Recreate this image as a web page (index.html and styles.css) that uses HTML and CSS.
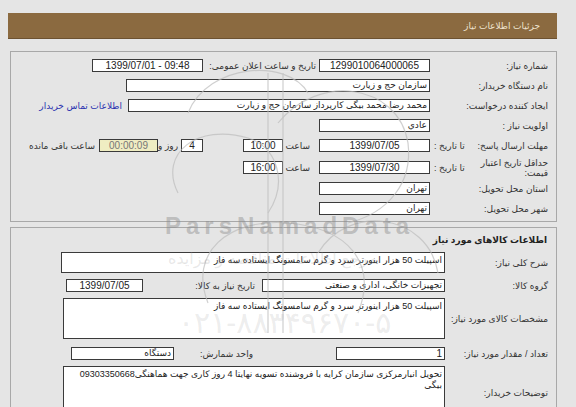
FILE: index.html
```html
<!DOCTYPE html>
<html lang="fa" dir="rtl">
<head>
<meta charset="utf-8">
<title>جزئیات اطلاعات نیاز</title>
<link rel="stylesheet" href="styles.css">
</head>
<body>
<div class="page">
  <div class="header"><span>جزئیات اطلاعات نیاز</span></div>

  <div class="box box1">
    <div class="row">
      <div class="lbl">شماره نیاز:</div>
      <div class="in w111 ctr">1299010064000065</div>
      <div class="lbl2">تاریخ و ساعت اعلان عمومی:</div>
      <div class="in w111 ctr">1399/07/01 - 09:48</div>
    </div>
    <div class="row">
      <div class="lbl">نام دستگاه خریدار:</div>
      <div class="in w304">سازمان حج و زیارت</div>
    </div>
    <div class="row">
      <div class="lbl">ایجاد کننده درخواست:</div>
      <div class="in w302">محمد رضا محمد بیگی کارپرداز سازمان حج و زیارت</div>
      <a class="link" href="#">اطلاعات تماس خریدار</a>
    </div>
    <div class="row">
      <div class="lbl">اولویت نیاز :</div>
      <div class="in w111">عادي</div>
    </div>
    <div class="row">
      <div class="lbl split"><span>مهلت ارسال پاسخ:</span><span>تا تاریخ :</span></div>
      <div class="in w111 ctr">1399/07/05</div>
      <div class="txt saat">ساعت</div>
      <div class="in w40 ctr">10:00</div>
      <div class="in w22 ctr day">4</div>
      <div class="txt ruz">روز و</div>
      <div class="in w59 ctr yellow">00:00:09</div>
      <div class="txt remain">ساعت باقی مانده</div>
    </div>
    <div class="row tall">
      <div class="lbl split"><span class="two">حداقل تاریخ اعتبار<br>قیمت:</span><span>تا تاریخ :</span></div>
      <div class="in w111 ctr">1399/07/30</div>
      <div class="txt saat">ساعت</div>
      <div class="in w40 ctr">16:00</div>
    </div>
    <div class="row">
      <div class="lbl">استان محل تحویل:</div>
      <div class="in w111">تهران</div>
    </div>
    <div class="row">
      <div class="lbl">شهر محل تحویل:</div>
      <div class="in w111">تهران</div>
    </div>
  </div>

  <div class="box box2">
    <div class="title">اطلاعات کالاهای مورد نیاز</div>
    <div class="row2 h24">
      <div class="lbl b2">شرح کلی نیاز:</div>
      <div class="area w384">اسپیلت 50 هزار اینورتر سرد و گرم سامسونگ ایستاده سه فاز</div>
    </div>
    <div class="row2">
      <div class="lbl b2">گروه کالا:</div>
      <div class="in w183">تجهیزات خانگی، اداری و صنعتی</div>
      <div class="txt needdate">تاریخ نیاز به کالا:</div>
      <div class="in w77 ctr">1399/07/05</div>
    </div>
    <div class="row2 h47">
      <div class="lbl b2">مشخصات کالای مورد نیاز:</div>
      <div class="area w382">اسپیلت 50 هزار اینورتر سرد و گرم سامسونگ ایستاده سه فاز</div>
    </div>
    <div class="row2">
      <div class="lbl b2">تعداد / مقدار مورد نیاز:</div>
      <div class="in w109 num">1</div>
      <div class="txt unit">واحد شمارش:</div>
      <div class="in w103">دستگاه</div>
    </div>
    <div class="row2 h50">
      <div class="lbl b2">توضیحات خریدار:</div>
      <div class="area w382">تحویل انبارمرکزی سازمان کرایه با فروشنده تسویه نهایتا 4 روز کاری جهت هماهنگی09303350668 بیگی</div>
    </div>
  </div>

  <svg class="logo" width="300" height="300" viewBox="0 0 300 300" aria-hidden="true">
    <g fill="none" stroke="#bdbdbd" stroke-width="1.2" opacity="0.7">
      <path d="M40 60 C 60 10, 140 5, 160 40"/>
      <path d="M130 70 C 170 20, 250 30, 260 90 C 265 130, 240 160, 200 170"/>
      <path d="M30 140 C 10 100, 50 70, 100 85 C 130 95, 140 130, 120 160"/>
      <path d="M60 250 C 40 200, 80 165, 140 170 C 200 175, 230 210, 210 260"/>
      <path d="M120 20 L 120 280"/>
      <path d="M135 20 L 135 280"/>
      <path d="M170 200 C 200 150, 280 160, 290 220"/>
    </g>
  </svg>
  <div class="wm">ParsNamadData</div>
  <div class="wm-fa">مرجع اطلاعات مناقصه و مزایده</div>
  <div class="wm-phone">۰۲۱-۸۸۳۴۹۶۷۰-۵</div>
</div>
</body>
</html>
```

FILE: styles.css
```css
html, body {
  margin: 0;
  padding: 0;
  background: #e5e5e5;
}
body {
  direction: rtl;
  font-family: "Liberation Sans", "DejaVu Sans", sans-serif;
  font-size: 9px;
  color: #222;
  overflow: hidden;
}
.page {
  position: relative;
  margin: 13px 19px 0 8px;
}
.header {
  height: 26px;
  background: #8b6a40;
  border-bottom: 1px solid #6d5231;
  box-sizing: border-box;
  display: flex;
  align-items: center;
  padding-right: 17px;
  color: #eee3cf;
  font-size: 9px;
}
.box {
  margin-left: 2px;
  border: 1px solid #a8a8a8;
  box-sizing: border-box;
}
.box1 {
  margin-top: 12px;
  height: 171px;
  padding-top: 7px;
  display: flex;
  flex-direction: column;
  gap: 7px;
}
.box2 {
  margin-top: 5px;
  height: 190px;
  padding-top: 6px;
  display: flex;
  flex-direction: column;
}
.row, .row2 {
  display: flex;
  align-items: center;
  height: 13px;
}
.row.tall {
  height: 15px;
  margin-top: 1px;
}
.lbl {
  width: 126px;
  padding-right: 8px;
  box-sizing: border-box;
  flex: none;
  white-space: nowrap;
  color: #333;
}
.lbl.b2 {
  width: 111px;
}
.lbl.split {
  display: flex;
  justify-content: space-between;
  align-items: center;
  padding-left: 4px;
}
.two {
  line-height: 10px;
}
.lbl2 {
  width: 116px;
  padding-right: 3px;
  box-sizing: border-box;
  flex: none;
  white-space: nowrap;
  color: #333;
}
.in {
  height: 13px;
  box-sizing: border-box;
  background: #fff;
  border: 1px solid #3a3a3a;
  line-height: 11px;
  padding: 0 2px;
  white-space: nowrap;
  overflow: hidden;
  flex: none;
  color: #222;
}
.ctr {
  text-align: center;
  direction: ltr;
  font-size: 10px;
}
.num { font-size: 10px; }
.w111 { width: 111px; }
.w304 { width: 304px; }
.w302 { width: 302px; }
.w40 { width: 40px; }
.w22 { width: 22px; }
.w59 { width: 59px; }
.w183 { width: 183px; }
.w77 { width: 77px; }
.w109 { width: 109px; }
.w103 { width: 103px; }
.yellow {
  background: #efedc2;
  color: #777;
}
.txt {
  flex: none;
  white-space: nowrap;
  color: #333;
}
.saat { margin-right: 9px; width: 27px; }
.day { margin-right: 40px; }
.ruz { margin-right: 3px; width: 20px; }
.remain { margin-right: 4px; }
.link {
  margin-right: 6px;
  color: #2b33b0;
  text-decoration: none;
  white-space: nowrap;
}
.title {
  font-weight: bold;
  padding-right: 9px;
  height: 13px;
  line-height: 13px;
  margin-bottom: 5px;
  color: #222;
}
.row2 { margin-bottom: 6px; }
.row2.h24 { height: 24px; }
.row2.h47 { height: 47px; margin-bottom: 8px; }
.row2.h50 { height: 50px; align-items: flex-start; }
.row2.h50 .lbl { margin-top: 22px; }
.area {
  flex: none;
  box-sizing: border-box;
  background: #fff;
  border: 1px solid #3a3a3a;
  padding: 2px 2px;
  line-height: 11px;
  color: #222;
  align-self: stretch;
}
.w384 { width: 384px; }
.w382 { width: 382px; }
.needdate { margin-right: 7px; width: 112px; }
.unit { margin-right: 83px; width: 79px; }

.logo {
  position: absolute;
  top: 40px;
  left: 140px;
  pointer-events: none;
}
.wm {
  position: absolute;
  top: 199px;
  left: 157px;
  font-family: "Liberation Sans", sans-serif;
  font-weight: bold;
  font-size: 24px;
  letter-spacing: 5px;
  color: rgba(140, 140, 140, 0.45);
  direction: ltr;
  pointer-events: none;
}
.wm-fa {
  position: absolute;
  top: 236px;
  left: 160px;
  font-size: 16px;
  color: rgba(150, 150, 150, 0.22);
  pointer-events: none;
  white-space: nowrap;
}
.wm-phone {
  position: absolute;
  top: 292px;
  left: 170px;
  font-size: 30px;
  color: rgba(150, 150, 150, 0.18);
  direction: ltr;
  pointer-events: none;
  white-space: nowrap;
}
```
